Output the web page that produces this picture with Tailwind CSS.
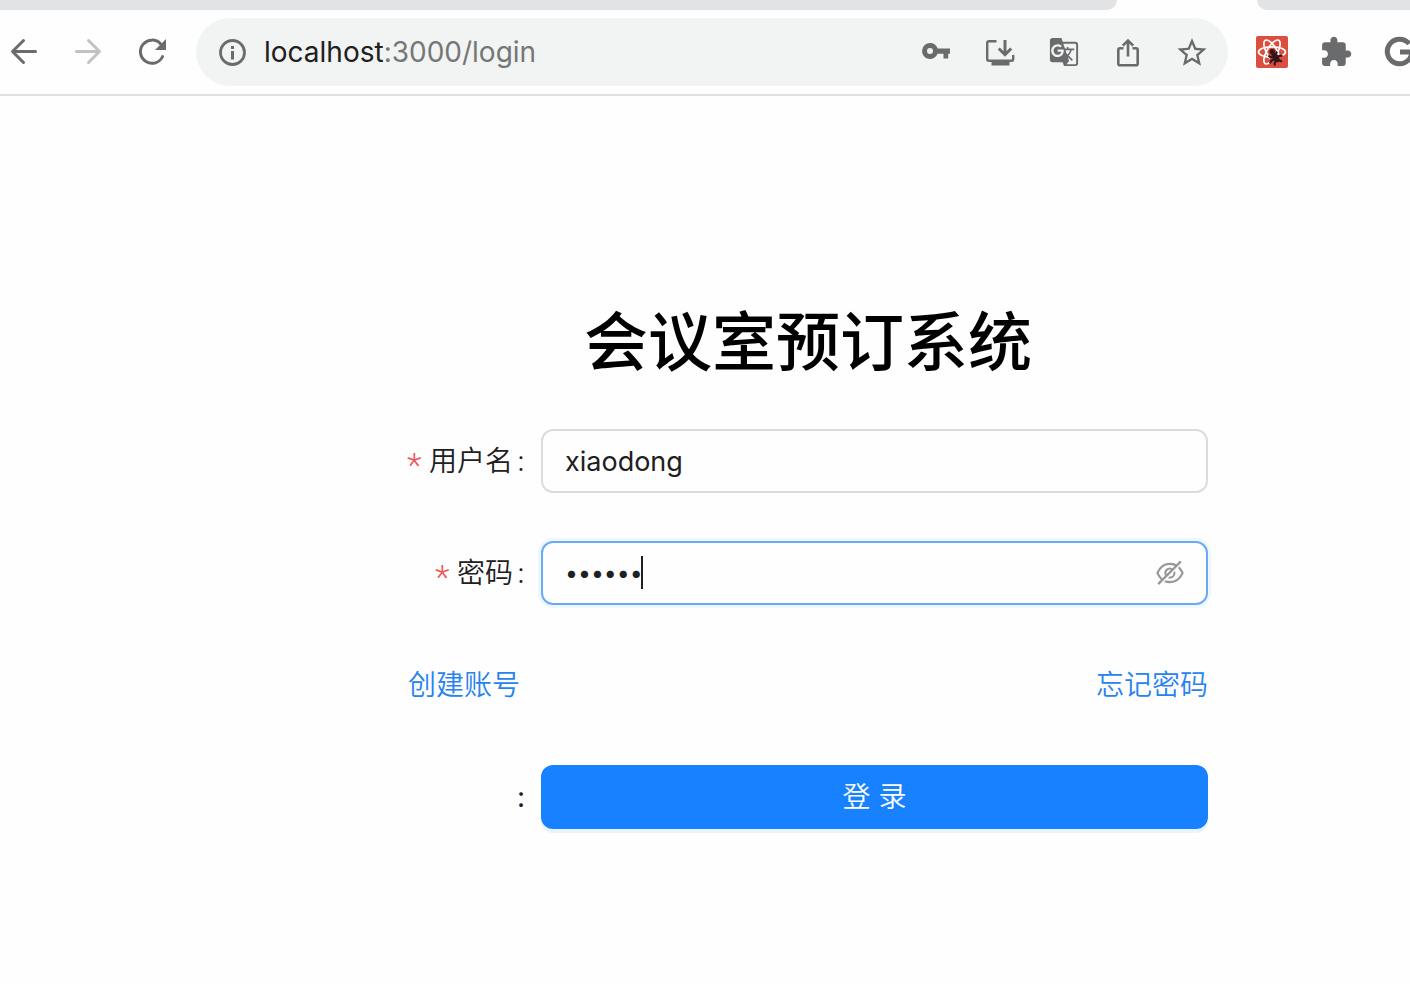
<!DOCTYPE html>
<html lang="zh-CN">
<head>
<meta charset="utf-8">
<meta name="viewport" content="width=device-width, initial-scale=1">
<title>会议室预订系统</title>
<script src="https://cdn.jsdelivr.net/npm/@tailwindcss/browser@4"></script>
</head>
<body class="min-h-screen overflow-x-hidden bg-[#fefefe] font-['Inter','Noto_Sans_CJK_SC',sans-serif] text-[#202020]">
<header class="border-b-2 border-[#dedfe0]">
  <!-- bottom edge of the tab strip -->
  <div class="flex h-[10px] justify-between">
    <div class="w-[1117px] rounded-br-2xl bg-[#e2e3e4]"></div>
    <div class="w-[153px] rounded-bl-2xl bg-[#e2e3e4]"></div>
  </div>
  <div class="flex items-center py-2 pl-2 text-[#696b6d]">
    <nav class="flex gap-8" aria-label="浏览器导航">
      <button type="button" aria-label="后退"><svg class="block size-8" viewBox="0 0 32 32" fill="none" stroke="currentColor" stroke-width="3" stroke-linecap="round" stroke-linejoin="round"><path d="M27.500 15.500H5M15.500 4.500L4.500 15.500L15.500 26.500"/></svg></button>
      <button type="button" aria-label="前进" class="text-[#c1c2c3]"><svg class="block size-8" viewBox="0 0 32 32" fill="none" stroke="currentColor" stroke-width="3" stroke-linecap="round" stroke-linejoin="round"><path d="M4.500 15.500H27M16.500 4.500L27.500 15.500L16.500 26.500"/></svg></button>
      <button type="button" aria-label="重新加载"><svg class="block size-8" viewBox="0 0 32 32" fill="none"><path d="M24.500 7.800A11.600 11.600 0 1 0 26.600 20.500" stroke="currentColor" stroke-width="3" stroke-linecap="round"/><path d="M30 3V14H19z" fill="currentColor"/></svg></button>
    </nav>
    <div class="ml-7 flex h-[68px] min-w-0 flex-1 items-center rounded-full bg-[#f2f3f3] pr-5 pl-5">
      <svg class="size-8 shrink-0" viewBox="0 0 32 32" fill="none"><circle cx="16.500" cy="16.500" r="12" stroke="currentColor" stroke-width="2.800"/><path d="M15 10h3v3h-3zM15 15h3v8.500h-3z" fill="currentColor"/></svg>
      <p class="ml-4 flex-1 text-[28px] leading-8 whitespace-nowrap text-[#757777]"><span class="text-[#202020]">localhost</span>:3000/login</p>
      <div class="flex gap-8">
        <button type="button" aria-label="密码"><svg class="block size-8" viewBox="0 0 32 32" fill="currentColor"><path fill-rule="evenodd" d="M10 7a8 8 0 0 1 7.600 5.500H30v5.200h-1.800V22.500h-4.700V17.700H17.600A8 8 0 1 1 10 7zm0 5.100a3 3 0 1 0 0 6 3 3 0 0 0 0-6z"/></svg></button>
        <button type="button" aria-label="安装"><svg class="block size-8" viewBox="0 0 32 32" fill="none" stroke="currentColor"><path d="M12.500 5.200H5Q3.200 5.200 3.200 7V23Q3.200 24.800 5 24.800H27.500Q29.200 24.800 29.200 23V19" stroke-width="2.400"/><path d="M7.500 24.500h18v5h-18z" fill="currentColor" stroke="none"/><path d="M21 4V18M14.800 12.500L21 18.700L27.200 12.500" stroke-width="3"/></svg></button>
        <button type="button" aria-label="翻译"><svg class="block size-8" viewBox="-0.500 -0.500 25 25" fill="currentColor"><path d="M21 4H11l-1-3H3c-1.100 0-2 .9-2 2v15c0 1.100.9 2 2 2h8l1 3h9c1.100 0 2-.9 2-2V6c0-1.100-.9-2-2-2zM7 16c-2.760 0-5-2.240-5-5s2.240-5 5-5c1.350 0 2.480.5 3.350 1.300L9.030 8.570c-.38-.36-1.040-.78-2.030-.78-1.740 0-3.150 1.440-3.150 3.210S5.260 14.210 7 14.210c2.010 0 2.840-1.440 2.920-2.410H7v-1.710h4.680c.07.31.12.61.12 1.020C11.800 13.970 9.890 16 7 16zm6.170-5.420h3.700c-.43 1.250-1.110 2.430-2.050 3.470-.31-.35-.6-.72-.86-1.100l-.79-2.370zm8.330 9.920c0 .55-.45 1-1 1H14l2-2.500-1.040-3.100 3.100 3.100.92-.92-3.300-3.250.02-.02c1.130-1.250 1.930-2.690 2.400-4.220H20v-1.300h-4.530V8h-1.290v1.290h-1.440L11.460 5.500h9.040c.55 0 1 .45 1 1v14z"/></svg></button>
        <button type="button" aria-label="分享"><svg class="block size-8" viewBox="0 0 32 32" fill="none" stroke="currentColor" stroke-width="2.600"><path d="M11.500 12.200H8Q6.300 12.200 6.300 14V27.500Q6.300 29.300 8 29.300H24Q25.700 29.300 25.700 27.500V14Q25.700 12.200 24 12.200H20.500M16 20.500V5M10.800 9.700L16 4.500L21.200 9.700"/></svg></button>
        <button type="button" aria-label="收藏"><svg class="block size-8" viewBox="1 0.600 22 22" fill="currentColor"><path d="M22 9.240l-7.190-.62L12 2 9.190 8.630 2 9.240l5.460 4.730L5.820 21 12 17.270 18.180 21l-1.630-7.030L22 9.240zM12 15.400l-3.760 2.270 1-4.280-3.320-2.880 4.380-.38L12 6.100l1.710 4.040 4.380.38-3.320 2.880 1 4.280L12 15.400z"/></svg></button>
      </div>
    </div>
    <div class="ml-7 flex gap-8">
      <button type="button" aria-label="React 开发者工具"><svg class="block size-8" viewBox="0 0 32 32" fill="none"><rect width="32" height="32" rx="2" fill="#dc4f3e"/><g stroke="#fff" stroke-width="1.700"><ellipse cx="16" cy="16" rx="13.500" ry="5.200"/><ellipse cx="16" cy="16" rx="13.500" ry="5.200" transform="rotate(60 16 16)"/><ellipse cx="16" cy="16" rx="13.500" ry="5.200" transform="rotate(120 16 16)"/></g><path d="M14.500 20.500l11-.5v11h-12z" fill="#dc4f3e"/><g fill="#34151a" stroke="#34151a"><circle cx="16.200" cy="15.800" r="2.800" stroke="none"/><ellipse cx="19.500" cy="21.500" rx="3.200" ry="5.600" transform="rotate(-35 19.500 21.500)" stroke="none"/><path d="M12.500 19.500l2 2 3-.5M14 27.500l1-3 3.500-1M19 29.500l-.5-2.500 1.500-2M19.500 19l1.500-3.500M21 21l3-1.500 2.500.5M22.500 24l3.500 1.500" stroke-width="2"/></g></svg></button>
      <button type="button" aria-label="扩展程序"><svg class="block size-8" viewBox="0.500 0.500 23 23" fill="currentColor"><path d="M20.500 11H19V7c0-1.100-.9-2-2-2h-4V3.500C13 2.120 11.880 1 10.500 1S8 2.120 8 3.500V5H4c-1.100 0-1.990.9-1.990 2v3.800H3.500c1.490 0 2.700 1.210 2.700 2.700s-1.210 2.700-2.700 2.700H2V20c0 1.100.9 2 2 2h3.800v-1.500c0-1.490 1.210-2.700 2.700-2.700 1.490 0 2.700 1.210 2.700 2.700V22H17c1.100 0 2-.9 2-2v-4h1.500c1.380 0 2.500-1.120 2.500-2.500S21.880 11 20.500 11z"/></svg></button>
      <button type="button" aria-label="Google"><svg class="block h-8 w-[26px]" viewBox="0 0 26 32" fill="none" stroke="currentColor" stroke-width="5"><path d="M25.200 7.800A12.300 12.300 0 1 0 27.500 18.600M16 16.100H30"/></svg></button>
    </div>
  </div>
</header>

<main class="pt-[206px] pr-[202px] pl-[408px]">
  <h1 class="mb-[47px] text-center text-[64px] leading-[80px] font-medium text-black">会议室预订系统</h1>
  <form class="grid grid-cols-[133px_1fr] gap-y-12 text-[28px] leading-8">
    <label for="username" class="flex items-center justify-end pr-4 font-[350] whitespace-nowrap"><span class="mr-2 w-[14px] pt-2 font-['Roboto'] text-[34px] font-light text-[#ee5a5c]">*</span>用户名<span class="ml-1">:</span></label>
    <input id="username" type="text" value="xiaodong" class="h-16 w-full rounded-xl border-2 border-[#dcdcdc] px-[22px] text-[27px] outline-none">

    <label for="password" class="flex items-center justify-end pr-4 font-[350] whitespace-nowrap"><span class="mr-2 w-[14px] pt-2 font-['Roboto'] text-[34px] font-light text-[#ee5a5c]">*</span>密码<span class="ml-1">:</span></label>
    <div class="relative flex h-16 items-center rounded-xl border-2 border-[#69a9f5] px-[22px] shadow-[0_0_0_3px_#eef6fe]">
      <input id="password" type="password" value="xiaodo" class="h-full min-w-0 flex-1 font-['Inter'] text-[23px] outline-none">
      <span class="absolute top-[13px] left-[98px] h-[33px] w-[2px] bg-[#202020]"></span>
      <button type="button" aria-label="显示密码" class="text-[#989898]"><svg class="block size-7" viewBox="64 64 896 896" fill="currentColor"><path d="M942.200 486.200Q889.470 375.110 816.700 305l-50.880 50.880C807.310 395.530 843.450 447.400 874.700 512 791.500 684.200 673.400 766 512 766q-72.670 0-133.870-22.380L323 798.750Q408 838 512 838q288.300 0 430.200-300.300a60.290 60.290 0 000-51.500zm-63.570-320.640L836 122.880a8 8 0 00-11.320 0L715.310 232.200Q624.860 186 512 186q-288.300 0-430.200 300.300a60.300 60.300 0 000 51.500q56.690 119.400 136.500 191.410L112.480 835a8 8 0 000 11.310L155.170 889a8 8 0 0011.310 0l712.150-712.120a8 8 0 000-11.320zM149.300 512C232.600 339.800 350.700 258 512 258c54.540 0 104.130 9.360 149.120 28.390l-70.300 70.300a176 176 0 00-238.130 238.130l-83.420 83.420C223.100 637.490 183.300 582.280 149.300 512zm246.700 0a112.110 112.110 0 01146.200-106.690L401.310 546.200A112 112 0 01396 512z"/><path d="M508 624c-3.460 0-6.870-.16-10.250-.47l-52.820 52.820a176.090 176.090 0 00227.420-227.420l-52.820 52.820c.31 3.380.47 6.790.47 10.250a111.940 111.940 0 01-112 112z"/></svg></button>
    </div>

    <div class="col-span-2 flex h-16 items-center justify-between font-[350] text-[#2783f0]">
      <a href="/register">创建账号</a>
      <a href="/update_password">忘记密码</a>
    </div>

    <div class="flex items-center justify-end pr-4">:</div>
    <button type="submit" class="h-16 rounded-xl bg-[#1781ff] font-[350] text-white shadow-[0_4px_0_#eaf4ff]">登 录</button>
  </form>
</main>
</body>
</html>
